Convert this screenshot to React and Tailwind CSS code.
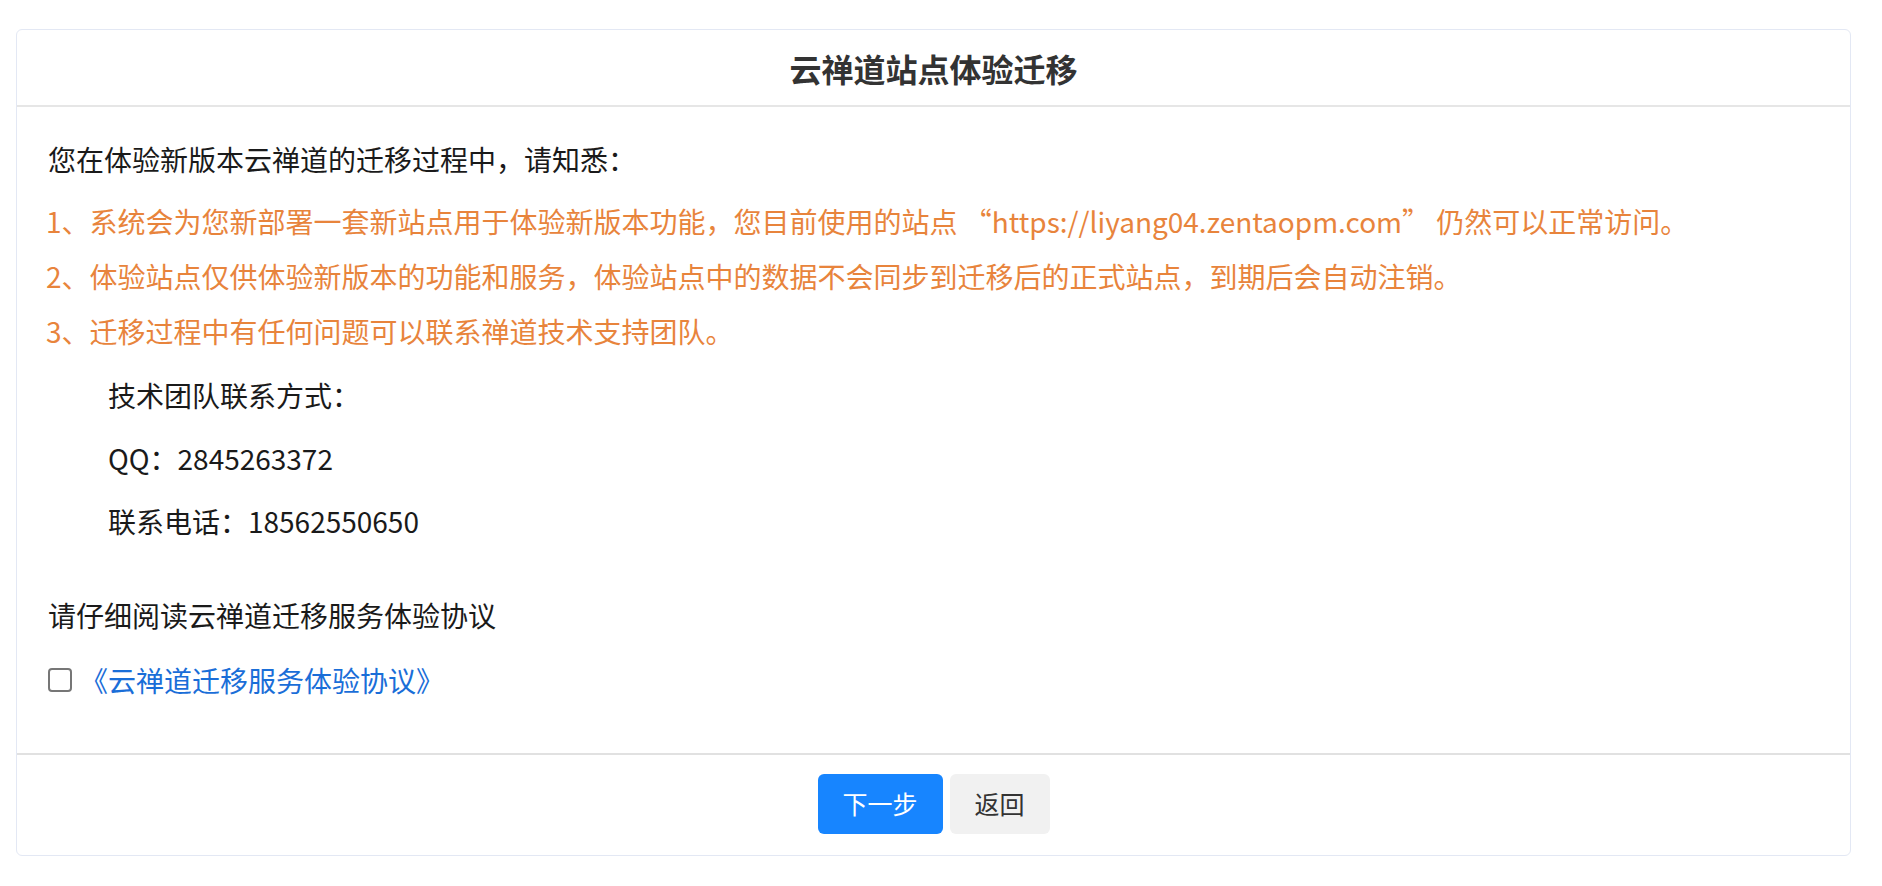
export default function App() {
  return (
    <div
      className="min-h-screen bg-white pt-[29px] pb-[30px] pl-[16px] pr-[31px]"
      style={{ fontFamily: '"Noto Sans CJK SC", "Noto Sans", sans-serif' }}
    >
      <div className="border border-[#e3e8f4] rounded-[6px] bg-white">
        {/* header */}
        <div className="h-[77px] flex items-center justify-center border-b-2 border-[#e6e6e6]">
          <h1 className="text-[32px] font-bold text-[#333333]">云禅道站点体验迁移</h1>
        </div>

        {/* body */}
        <div className="pl-[31px] pr-8 pt-[31px] pb-[52px] text-[28px] text-[#1a1a1a]">
          <p className="leading-[42px]">您在体验新版本云禅道的迁移过程中，请知悉：</p>

          <div className="mt-[14px] text-[#e8843c] leading-[55px]">
            <p className="-ml-[2px]">
              1、系统会为您新部署一套新站点用于体验新版本功能，您目前使用的站点 “https://liyang04.zentaopm.com” 仍然可以正常访问。
            </p>
            <p className="-ml-[2px]">
              2、体验站点仅供体验新版本的功能和服务，体验站点中的数据不会同步到迁移后的正式站点，到期后会自动注销。
            </p>
            <p className="-ml-[2px]">3、迁移过程中有任何问题可以联系禅道技术支持团队。</p>
          </div>

          <div className="mt-[5px] pl-[60px] leading-[63px]">
            <p>技术团队联系方式：</p>
            <p>QQ：2845263372</p>
            <p>联系电话：18562550650</p>
          </div>

          <p className="mt-[41px] leading-[42px]">请仔细阅读云禅道迁移服务体验协议</p>

          <label className="mt-[23px] flex items-center gap-[8px] leading-[42px]">
            <input
              type="checkbox"
              className="w-[24px] h-[24px] appearance-none border-2 border-[#767676] rounded-[4px] bg-white"
            />
            <a className="text-[#1a6ed8] cursor-pointer">《云禅道迁移服务体验协议》</a>
          </label>
        </div>

        {/* footer */}
        <div className="border-t-2 border-[#e1e1e1] flex justify-center gap-[7px] pt-[19px] pb-[21px]">
          <button className="w-[125px] h-[60px] rounded-[6px] bg-[#1785ff] text-white text-[25px]">
            下一步
          </button>
          <button className="w-[100px] h-[60px] rounded-[6px] bg-[#f1f1f1] text-[#333333] text-[25px]">
            返回
          </button>
        </div>
      </div>
    </div>
  );
}
